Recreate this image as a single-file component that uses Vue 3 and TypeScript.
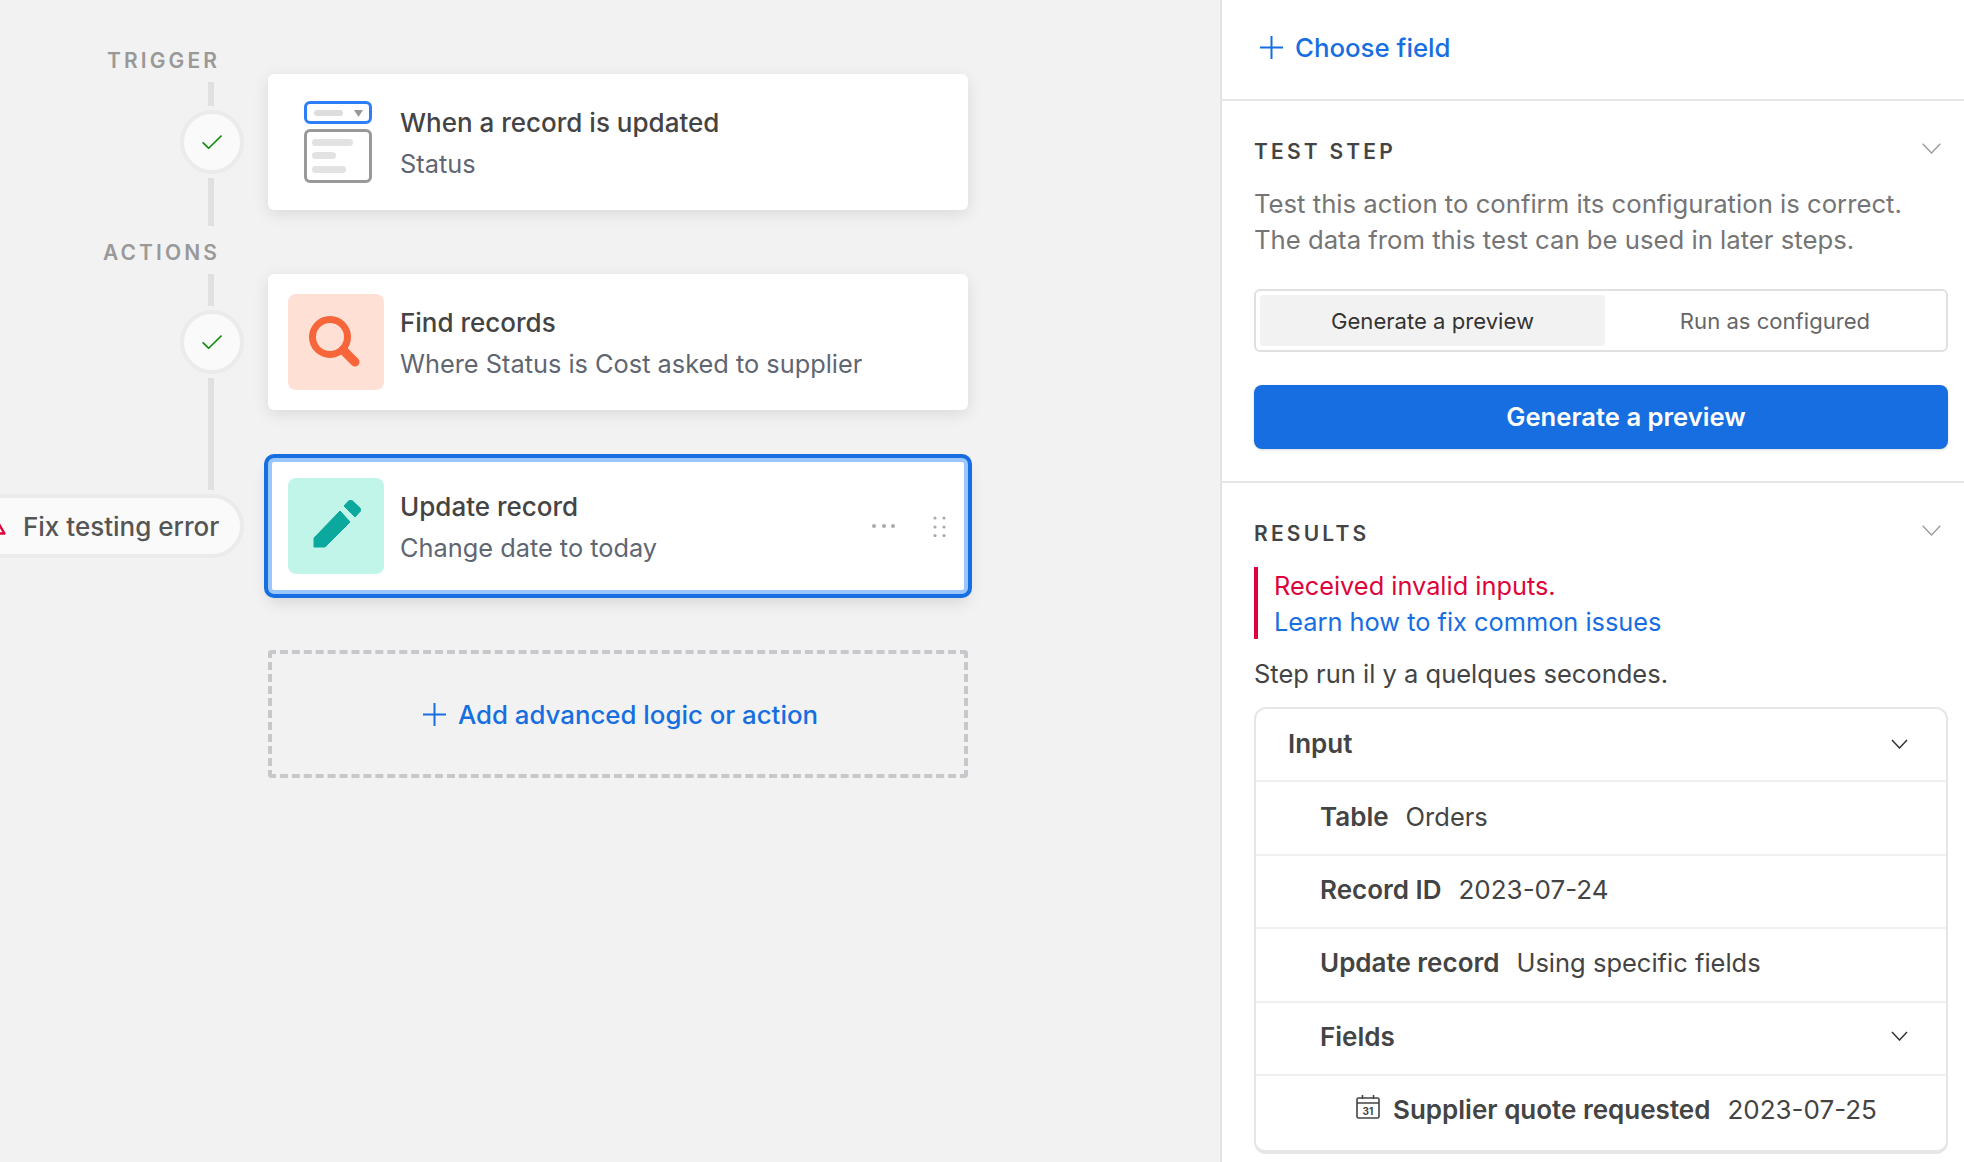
<script setup lang="ts">
interface Row { label: string; value: string; date?: boolean }
const rows: Row[] = [
  { label: 'Table', value: 'Orders' },
  { label: 'Record ID', value: '2023-07-24', date: true },
  { label: 'Update record', value: 'Using specific fields' },
]
</script>

<template>
  <div class="app">
    <div class="canvas">
      <div class="rail">
        <div class="rail-label">TRIGGER</div>
        <div class="line l24"></div>
        <div class="node">
          <svg width="20" height="14" viewBox="0 0 20 14" fill="none"><path d="M.6 7.400 6.600 13.200 19.600.6" stroke="#0a8a0f" stroke-width="1.600"/></svg>
        </div>
        <div class="line l48"></div>
        <div class="rail-label second">ACTIONS</div>
        <div class="line l32"></div>
        <div class="node">
          <svg width="20" height="14" viewBox="0 0 20 14" fill="none"><path d="M.6 7.400 6.600 13.200 19.600.6" stroke="#0a8a0f" stroke-width="1.600"/></svg>
        </div>
        <div class="line l112"></div>
        <div class="pill">
          <svg class="warn" width="20" height="18" viewBox="0 0 20 18" fill="none"><path d="M10 2 18.500 16.500H1.500Z" stroke="#dc043b" stroke-width="2.400" stroke-linejoin="round"/></svg>
          <span>Fix testing error</span>
        </div>
      </div>

      <div class="cards">
        <div class="card">
          <div class="tile trigger">
            <svg width="68" height="82" viewBox="0 0 68 82" fill="none">
              <rect x="1.500" y="1.500" width="65" height="20" rx="4.500" fill="#fff" stroke="#2d7ff9" stroke-width="3"/>
              <rect x="10" y="9" width="29" height="6" rx="3" fill="#ddd"/>
              <path d="M50 9h9l-4.500 7z" fill="#999"/>
              <rect x="1.500" y="29.500" width="65" height="51" rx="4.500" fill="#fff" stroke="#999" stroke-width="3"/>
              <rect x="8" y="38" width="41" height="7" rx="3.500" fill="#e2e2e2"/>
              <rect x="8" y="51" width="24" height="7" rx="3.500" fill="#e2e2e2"/>
              <rect x="8" y="65" width="34" height="7" rx="3.500" fill="#e2e2e2"/>
            </svg>
          </div>
          <div class="card-text">
            <div class="title">When a record is updated</div>
            <div class="sub">Status</div>
          </div>
        </div>

        <div class="card gap-64">
          <div class="tile search">
            <svg width="52" height="52" viewBox="0 0 52 52" fill="none">
              <circle cx="21" cy="21" r="17.500" stroke="#f7653b" stroke-width="7"/>
              <path d="M34 34 46 46" stroke="#f7653b" stroke-width="9" stroke-linecap="round"/>
            </svg>
          </div>
          <div class="card-text">
            <div class="title">Find records</div>
            <div class="sub">Where Status is Cost asked to supplier</div>
          </div>
        </div>

        <div class="card selected gap-48">
          <div class="tile edit">
            <svg width="48" height="48" viewBox="0 0 48 48" fill="none">
              <path d="M1 38V47H12L37 22 27 11Z M31 6 36 0.500C37 0 38 0 39 0.500L47 8C48 9 48 10 47.500 11L42 17Z" fill="#0ba99d" stroke="#0ba99d" stroke-linejoin="round"/>
            </svg>
          </div>
          <div class="card-text grow">
            <div class="title">Update record</div>
            <div class="sub">Change date to today</div>
          </div>
          <svg class="more" width="24" height="4" viewBox="0 0 24 4" fill="#aaa"><circle cx="2" cy="2" r="2"/><circle cx="12" cy="2" r="2"/><circle cx="21" cy="2" r="2"/></svg>
          <svg class="grip" width="13" height="21" viewBox="0 0 13 21" fill="#aaa">
            <circle cx="2" cy="2" r="1.600"/><circle cx="11" cy="2" r="1.600"/>
            <circle cx="2" cy="11" r="1.600"/><circle cx="11" cy="11" r="1.600"/>
            <circle cx="2" cy="19.500" r="1.600"/><circle cx="11" cy="19.500" r="1.600"/>
          </svg>
        </div>

        <div class="add">
          <svg width="23" height="23" viewBox="0 0 23 23" stroke="#166ee1" stroke-width="2"><path d="M11.500 0V23M0 11.500H23"/></svg>
          <span>Add advanced logic or action</span>
        </div>
      </div>
    </div>

    <div class="panel">
      <section class="choose">
        <svg width="23" height="23" viewBox="0 0 23 23" stroke="#166ee1" stroke-width="2"><path d="M11.500 0V23M0 11.500H23"/></svg>
        <span>Choose field</span>
      </section>

      <section class="block">
        <div class="head">
          <span>TEST STEP</span>
          <svg class="chev" width="19" height="11" viewBox="0 0 19 11" fill="none"><path d="M.7.7 9.500 10 18.300.7" stroke="#999" stroke-width="1.300"/></svg>
        </div>
        <p class="desc">Test this action to confirm its configuration is correct.<br>The data from this test can be used in later steps.</p>
        <div class="segment">
          <div class="seg active">Generate a preview</div>
          <div class="seg">Run as configured</div>
        </div>
        <div class="primary">Generate a preview</div>
      </section>

      <section class="block last">
        <div class="head">
          <span>RESULTS</span>
          <svg class="chev" width="19" height="11" viewBox="0 0 19 11" fill="none"><path d="M.7.7 9.500 10 18.300.7" stroke="#999" stroke-width="1.300"/></svg>
        </div>
        <div class="error">
          <div class="err-text">Received invalid inputs.</div>
          <div class="err-link">Learn how to fix common issues</div>
        </div>
        <div class="ran">Step run il y a quelques secondes.</div>
        <div class="box">
          <div class="row top">
            <b>Input</b>
            <svg class="row-chev" width="17" height="10" viewBox="0 0 17 10" fill="none"><path d="M1 1 8.500 9 16 1" stroke="#333" stroke-width="1.500"/></svg>
          </div>
          <div v-for="r in rows" :key="r.label" class="row">
            <b>{{ r.label }}</b><span :class="{ date: r.date }">{{ r.value }}</span>
          </div>
          <div class="row">
            <b>Fields</b>
            <svg class="row-chev" width="17" height="10" viewBox="0 0 17 10" fill="none"><path d="M1 1 8.500 9 16 1" stroke="#333" stroke-width="1.500"/></svg>
          </div>
          <div class="row leaf">
            <svg class="cal" width="24" height="24" viewBox="0 0 24 24" fill="none" stroke="#444" stroke-width="1.600">
              <rect x="1" y="3" width="22" height="20" rx="1.500"/>
              <path d="M1 8H23M6.500 0V4M17.500 0V4"/>
              <text x="12" y="19.500" font-size="10" font-weight="700" text-anchor="middle" fill="#444" stroke="none" font-family="Inter, sans-serif">31</text>
            </svg>
            <b>Supplier quote requested</b><span class="date">2023-07-25</span>
          </div>
        </div>
      </section>
    </div>
  </div>
</template>

<style>
html, body { margin: 0; overflow: hidden; }
</style>

<style scoped>
.app {
  display: flex;
  width: 1964px;
  height: 1162px;
  overflow: hidden;
  font-family: Inter, "Liberation Sans", sans-serif;
  font-size: 25.500px;
  color: #444;
}
.canvas {
  flex: 0 0 1222px;
  box-sizing: border-box;
  display: flex;
  gap: 24px;
  background: #f2f2f2;
  border-right: 2px solid #e3e3e3;
  overflow: hidden;
}
.rail {
  flex: 0 0 244px;
  display: flex;
  flex-direction: column;
  padding-top: 45px;
}
.rail-label {
  height: 32px;
  line-height: 32px;
  text-align: right;
  padding-right: 24px;
  font-size: 21px;
  font-weight: 600;
  letter-spacing: 3.100px;
  color: #999;
}
.rail-label.second { margin-top: 11px; }
.line { width: 6px; margin-left: 208px; margin-top: 5px; background: #e0e0e0; }
.l24 { height: 24px; }
.l48 { height: 48px; margin-top: 4px; }
.l32 { height: 32px; }
.l112 { height: 112px; margin-top: 4px; }
.node {
  box-sizing: border-box;
  width: 64px;
  height: 64px;
  margin: 4px 0 0 180px;
  border: 4px solid #ebebeb;
  border-radius: 50%;
  background: #fafafa;
  display: flex;
  align-items: center;
  justify-content: center;
}
.pill {
  box-sizing: border-box;
  width: 274px;
  height: 64px;
  margin: 4px 0 0 -30px;
  padding-left: 12px;
  display: flex;
  align-items: center;
  gap: 17px;
  border: 4px solid #ebebeb;
  border-radius: 32px;
  background: #fafafa;
  font-weight: 500;
  font-size: 26px;
  color: #555;
  white-space: nowrap;
}
.warn { flex: none; }
.cards { flex: 0 0 700px; padding-top: 74px; display: flex; flex-direction: column; }
.card {
  box-sizing: border-box;
  height: 136px;
  display: flex;
  align-items: center;
  gap: 16px;
  padding: 0 20px;
  background: #fff;
  border-radius: 6px;
  box-shadow: 0 4px 16px rgba(0, 0, 0, 0.1);
}
.gap-64 { margin-top: 64px; }
.gap-48 { margin-top: 48px; }
.selected {
  border: 4px solid #9ac5fd;
  padding: 0 16px;
  box-shadow: 0 0 0 4px #166ee1, 0 8px 16px rgba(0, 0, 0, 0.12);
}
.tile {
  flex: 0 0 96px;
  height: 96px;
  border-radius: 8px;
  display: flex;
  align-items: center;
  justify-content: center;
}
.trigger svg { margin-left: 3px; }
.search { background: #ffe0d5; }
.edit { background: #c2f5e9; }
.search svg { margin-right: 2px; }
.edit svg { margin: 0 0 4px 1px; }
.card-text { display: flex; flex-direction: column; gap: 5px; min-width: 0; padding-top: 2px; }
.grow { flex: 1; }
.title { font-size: 26px; font-weight: 500; line-height: 36px; color: #444; }
.sub { font-size: 25.350px; line-height: 36px; color: #5f6672; }
.more { margin-right: 21px; }
.grip { margin-right: 2px; }
.add {
  box-sizing: border-box;
  height: 128px;
  margin-top: 56px;
  padding-left: 5px;
  border: 4px dashed #c8c8cc;
  border-radius: 4px;
  display: flex;
  align-items: center;
  justify-content: center;
  gap: 12px;
  font-size: 25.800px;
  font-weight: 500;
  color: #166ee1;
}
.panel { flex: 1; background: #fff; min-width: 0; }
section { box-sizing: border-box; }
.choose {
  height: 101px;
  padding: 0 0 5px 38px;
  display: flex;
  align-items: center;
  gap: 12px;
  font-size: 25.800px;
  font-weight: 500;
  color: #166ee1;
  border-bottom: 2px solid #e6e6e6;
}
.block {
  padding: 34px 16px 32px 32px;
  border-bottom: 2px solid #e6e6e6;
}
.block.last { border-bottom: 0; padding-bottom: 0; }
.head {
  height: 32px;
  display: flex;
  align-items: center;
  justify-content: space-between;
  font-size: 21px;
  font-weight: 600;
  letter-spacing: 3.200px;
  color: #444;
}
.chev { margin: -5px 7px 0 0; }
.desc { margin: 19px 0 0; line-height: 36px; font-size: 25.700px; color: #757575; }
.segment {
  box-sizing: border-box;
  height: 63px;
  margin-top: 31px;
  padding: 4px;
  display: flex;
  border: 2px solid #e0e0e0;
  border-radius: 6px;
}
.seg {
  flex: 1;
  padding-left: 3px;
  display: flex;
  align-items: center;
  justify-content: center;
  font-size: 22.100px;
  color: #666;
  border-radius: 4px;
}
.seg.active { flex: 0 0 345px; padding-left: 0; background: #f2f2f2; color: #333; }
.primary {
  box-sizing: border-box;
  height: 64px;
  margin-top: 33px;
  padding: 0 0 2px 50px;
  display: flex;
  align-items: center;
  justify-content: center;
  background: #166ee1;
  color: #fff;
  font-size: 25.600px;
  font-weight: 600;
  border-radius: 8px;
  box-shadow: 0 1px 3px rgba(0, 0, 0, 0.15);
}
.error {
  box-sizing: border-box;
  height: 72px;
  margin-top: 18px;
  padding: 1px 0 0 16px;
  border-left: 4px solid #dc043b;
  line-height: 36px;
  font-size: 25.350px;
}
.err-text { color: #dc043b; }
.err-link { color: #166ee1; }
.ran { margin-top: 17px; line-height: 36px; color: #444; }
.box {
  margin-top: 15px;
  border: 2px solid #e6e6e6;
  border-bottom-width: 4px;
  border-radius: 12px;
}
.row {
  box-sizing: border-box;
  height: 73.400px;
  padding: 0 38px 4px 64px;
  display: flex;
  align-items: center;
  gap: 17px;
  border-bottom: 2px solid #f0f0f0;
  font-size: 25.500px;
  color: #444;
}
.row .date { font-size: 26px; }
.row b { font-size: 26px; font-weight: 600; }
.row.top { padding-left: 32px; padding-bottom: 2px; }
.row.leaf { padding-left: 100px; padding-bottom: 7px; border-bottom: 0; height: 74px; gap: 17px; }
.row-chev { margin-left: auto; }
.cal { margin: -4px -4px 0 0; flex: none; }
</style>
